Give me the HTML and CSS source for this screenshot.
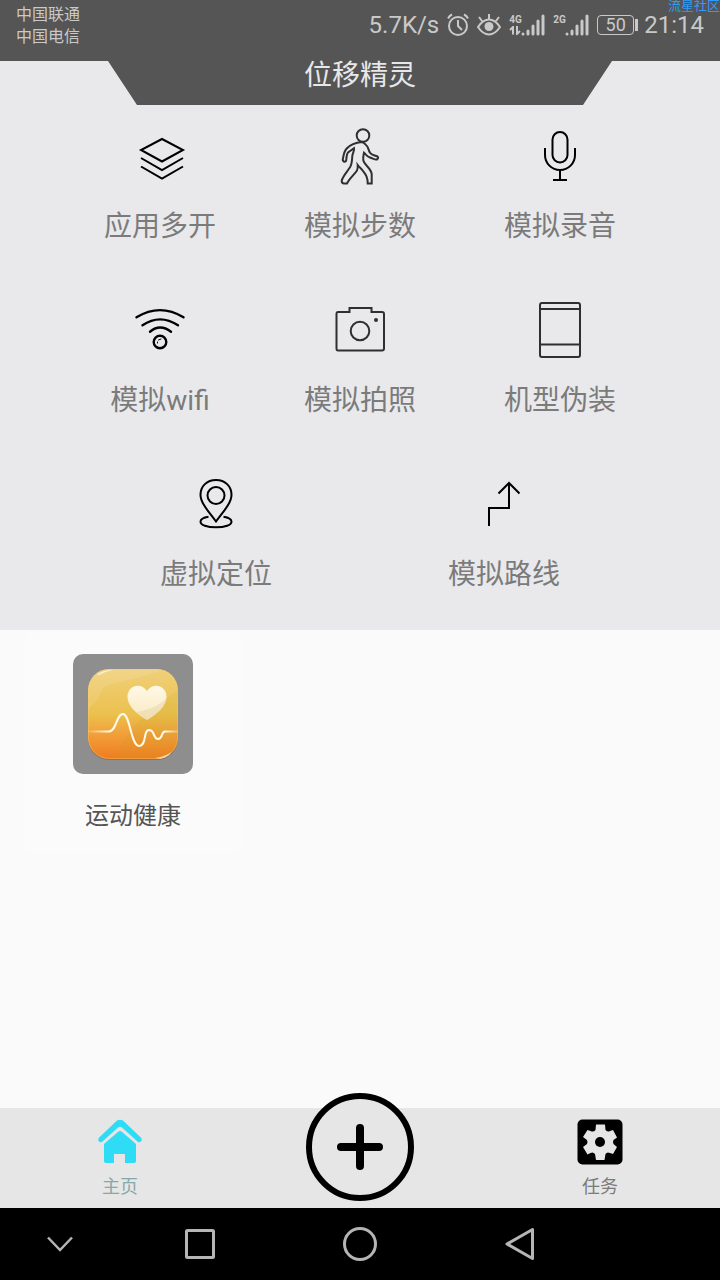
FILE: index.html
```html
<!DOCTYPE html>
<html lang="zh-CN">
<head>
<meta charset="utf-8">
<meta name="viewport" content="width=device-width, initial-scale=1">
<title>位移精灵</title>
<link rel="stylesheet" href="styles.css">
</head>
<body>
<div class="top">
  <header class="header">
    <div class="status">
      <div class="carriers"><span>中国联通</span><span>中国电信</span></div>
      <div class="indicators">
        <span class="speed">5.7K/s</span>
        <svg class="alarm" width="22" height="24" viewBox="0 0 22 24" fill="none" stroke="#c9c9c9" stroke-width="2"><circle cx="11" cy="13" r="9"/><path d="M11 7v6l4 4M1 5.500C2 3.500 3 2.500 5 1.500M21 5.500C20 3.500 19 2.500 17 1.500"/></svg>
        <svg class="eye" width="24" height="24" viewBox="0 0 24 24" fill="none" stroke="#c9c9c9" stroke-width="2"><path d="M1 14C5 8 9 6.500 12 6.500S19 8 23 14C19 20 15 21.500 12 21.500S5 20 1 14ZM12 6V1M5 8L2 4M19 8L22 4"/><circle cx="12" cy="13.500" r="4.500" fill="#c9c9c9" stroke="none"/></svg>
        <span class="signal"><span class="net"><b>4G</b><svg width="12" height="9" viewBox="0 0 12 9" fill="none" stroke="#c9c9c9" stroke-width="2"><path d="M4 8.500V1L1 4M8 0V8L11 5"/></svg></span><svg width="24" height="22" viewBox="0 0 24 22" fill="none" stroke="#c9c9c9" stroke-width="3" stroke-linecap="round"><path d="M2 20V20M7 20V17M12 20V12M17 20V7M22 20V2"/></svg></span>
        <span class="signal"><span class="net"><b>2G</b></span><svg width="24" height="22" viewBox="0 0 24 22" fill="none" stroke="#c9c9c9" stroke-width="3" stroke-linecap="round"><path d="M2 20V20M7 20V17M12 20V12M17 20V7M22 20V2"/></svg></span>
        <span class="battery">50</span>
        <time class="clock">21:14</time>
      </div>
      <span class="watermark">流星社区</span>
    </div>
    <h1 class="title">位移精灵</h1>
  </header>

  <nav class="tools" aria-label="功能">
    <div class="row">
      <button class="tool"><svg viewBox="0 0 60 60" stroke="#000"><path d="M32 12L53 23L32 34.500L11 23ZM11 31L32 43L53 31M11 39.500L32 51.500L53 39.500"/></svg><span>应用多开</span></button>
      <button class="tool"><svg viewBox="0 0 60 60"><circle cx="33" cy="8.500" r="6.300"/><path d="M31.700 15C26 15.500 20 18 16.700 21.500C13.500 25 13.500 29 12.700 33Q14 36 16 34C17 30 16 28 18 25.500L24 21.300C24.500 24 22.700 26 22.300 29C22 34 22 37 20 40.300C17 45 13 49 11.700 53.700Q11.700 56.500 14 56.500H17C19 52 24 48 27 43.500Q28 41 27.700 38C30 41 32 42 33 44C36 48 37.700 50 37.700 56.500H41.700V47C41 41 34 38 33.300 33C32.800 30 33.500 28 34 25.700C36.500 28 37 29.500 40 30.500C44 32 45 33 47 32.500Q49 30.500 47.500 29.500C44 28 41.500 28 40 25.700C38 23 39 20 35.500 17.500Q34 15.500 31.700 15Z"/></svg><span>模拟步数</span></button>
      <button class="tool"><svg viewBox="0 0 60 60" stroke="#000"><rect x="22.500" y="5" width="15" height="30.500" rx="7.500"/><path d="M15 21V28A15 15 0 0 0 45 28V21M30 43V53M23 53H37"/></svg><span>模拟录音</span></button>
    </div>
    <div class="row">
      <button class="tool"><svg viewBox="0 0 60 60" stroke="#000" stroke-linecap="round"><path stroke-width="2.400" d="M6.500 16.300Q30 2 53.500 16.300M12.500 24.300Q30 12.500 48 24.300M20 30.700Q30 22.500 41 30.700"/><circle cx="30" cy="41" r="6.300" stroke-width="2.400"/><path stroke-width="1" d="M27.500 42V41M28.500 39L31 38"/></svg><span>模拟wifi</span></button>
      <button class="tool"><svg viewBox="0 0 60 60"><path d="M8 11H19.500V7H41.500V11H52Q54 11 54 13V47.500Q54 49.500 52 49.500H8Q6.500 49.500 6.500 47.500V13Q6.500 11 8 11Z"/><circle cx="30" cy="30" r="9.300"/><circle cx="46" cy="19" r="2" fill="#2f2f32" stroke="none"/></svg><span>模拟拍照</span></button>
      <button class="tool"><svg viewBox="0 0 60 60"><rect x="10" y="2" width="40" height="54" rx="2"/><path d="M10 8H50M10 43.500H50"/></svg><span>机型伪装</span></button>
    </div>
    <div class="row row-pair">
      <button class="tool"><svg viewBox="0 0 60 60" stroke="#000"><path d="M30 46.500C23 37 14.500 28 14.500 20C14.500 11 21 5 30 5S45.500 11 45.500 20C45.500 28 37 37 30 46.500Z"/><circle cx="30" cy="20.500" r="8.500"/><path d="M22.500 41.700C17 42.500 14.500 44.500 14.500 46.700C14.500 50 21 52.300 30 52.300S45.500 50 45.500 46.700C45.500 44.500 43 42.500 37.500 41.700"/></svg><span>虚拟定位</span></button>
      <button class="tool"><svg viewBox="0 0 60 60" stroke="#000"><path d="M15 51V33H35V8M24.500 18.500L35 8L45.500 18.500"/></svg><span>模拟路线</span></button>
    </div>
  </nav>
</div>

<main class="apps">
  <button class="app">
    <span class="app-tile">
      <svg width="92" height="94" viewBox="0 -1 92 94">
        <defs>
          <linearGradient id="base" x2="0" y2="1"><stop offset="0" stop-color="#f0d07c"/><stop offset=".5" stop-color="#ebc14e"/><stop offset=".7" stop-color="#f1a23c"/><stop offset="1" stop-color="#f07a20"/></linearGradient>
          <linearGradient id="line" gradientUnits="userSpaceOnUse" x1="1" x2="91"><stop offset="0" stop-color="#fff" stop-opacity=".1"/><stop offset=".25" stop-color="#fffbe8"/><stop offset=".85" stop-color="#fffbe8"/><stop offset="1" stop-color="#fff" stop-opacity=".2"/></linearGradient>
          <linearGradient id="heart" x2="0" y2="1"><stop offset="0" stop-color="#fff8e6"/><stop offset="1" stop-color="#f8e9c0"/></linearGradient>
          <clipPath id="shape"><rect x="1" y="1" width="90" height="90" rx="21"/></clipPath>
        </defs>
        <rect x="1" y="2" width="90" height="90" rx="21" fill="#6b6b6b" opacity=".6"/>
        <g clip-path="url(#shape)">
          <rect width="92" height="92" fill="url(#base)"/>
          <path d="M0 0H78C50 14 26 12 16 20C12 30 8 36 0 42Z" fill="#fff" opacity=".1"/>
          <path d="M91 22C70 38 38 58 28 91H91Z" fill="#b8a020" opacity=".13"/>
          <path d="M10 7Q15 2 26 2Q17 4 12 7ZM68 90Q80 88 84 84Q82 90 74 91Z" fill="#fff" opacity=".7"/>
        </g>
        <rect x="1.500" y="1.500" width="89" height="89" rx="21" fill="none" stroke="#f6cf6b" opacity=".35"/>
        <path d="M60 52C50 46 40.500 38 40.500 29C40.500 17 54 14 60 23C66 14 79.500 17 79.500 29C79.500 38 70 46 60 52Z" fill="url(#heart)"/>
        <path d="M79.500 30C79 38 70 46 60 52L49 44C62 42 72 38 79.500 30Z" fill="#d9c38a" opacity=".3"/>
        <path d="M1 63.500H22C30 63 29 46 36 46S44 78 52 78S56 62 62 62S66 71 71 71S74 63.500 78 63.500H91" fill="none" stroke="url(#line)" stroke-width="2"/>
      </svg>
    </span>
    <span class="app-name">运动健康</span>
  </button>
</main>

<nav class="tabs" aria-label="标签">
  <button class="tab tab-active"><svg width="48" height="48" viewBox="0 0 48 48" fill="#2fdcf6"><path d="M2.700 20L21 2.500Q24 .800 27 2.500L45.300 20Q46.500 22 45 23.500Q43 25 41.500 23.500L26 9.500Q24 8 22 9.500L6.500 23.500Q4.500 25 3 23.500Q1.500 22 2.700 20Z"/><path d="M8 26L22.500 13.500Q24 12.500 25.500 13.500L40 26V43Q40 45 38 45H29V36H18V45H10Q8 45 8 43Z"/></svg><span>主页</span></button>
  <button class="fab" aria-label="添加"><svg width="48" height="48" viewBox="0 0 48 48" stroke="#000" stroke-width="8" stroke-linecap="round"><path d="M24 5V43M5 24H43"/></svg></button>
  <button class="tab"><svg width="48" height="48" viewBox="0 0 48 48"><rect x="1.500" y="1.500" width="45" height="45" rx="5"/><path fill="#e6e6e6" d="M20 6.500H29L29.500 12Q32 14.500 34 13L37 12L41 19.500L37.500 22Q36.500 24 37.500 26L41 29L37 36L34 35Q31 33.500 29.500 36L28.500 42H20L19 36Q17 33.500 14.500 35L11.500 36.500L7 29L11 26Q12 24 11 22L7 19L11.500 12L14.500 13Q17.500 14.500 19.500 12Z"/><circle cx="24" cy="24" r="5"/></svg><span>任务</span></button>
</nav>

<nav class="system" aria-label="系统导航">
  <button aria-label="收起"><svg viewBox="0 0 40 40"><path d="M8 13.500L20 26L32 13.500" stroke-width="2.500"/></svg></button>
  <button aria-label="最近任务"><svg viewBox="0 0 40 40"><rect x="6.500" y="6.500" width="27" height="27" rx="1"/></svg></button>
  <button aria-label="主屏幕"><svg viewBox="0 0 40 40"><circle cx="20" cy="20" r="15.500"/></svg></button>
  <button aria-label="返回"><svg viewBox="0 0 40 40"><path d="M32.500 5.500V34.500L7 20Z" stroke-linejoin="round"/></svg></button>
</nav>
</body>
</html>
```
FILE: styles.css
```css
* { box-sizing: border-box; }

body {
  margin: 0;
  min-height: 100vh;
  display: flex;
  flex-direction: column;
  background: #fafafa;
  font-family: Roboto, "Noto Sans CJK SC", sans-serif;
  font-weight: 400;
}

button {
  margin: 0;
  padding: 0;
  border: 0;
  background: none;
  color: inherit;
  font: inherit;
  cursor: pointer;
}

svg { display: block; flex: none; }

.top { background: #e9e9eb; }

.header {
  background: #555;
  clip-path: polygon(0 0, 100% 0, 100% 61px, calc(100% - 108px) 61px, calc(100% - 137px) 100%, 137px 100%, 108px 61px, 0 61px);
}

.status {
  position: relative;
  display: flex;
  justify-content: space-between;
  height: 50px;
  padding: 3px 16px 0;
  color: #c9c9c9;
}

.carriers {
  display: flex;
  flex-direction: column;
  padding-top: 1px;
  font-size: 16px;
  line-height: 22px;
}

.indicators {
  display: flex;
  align-items: center;
  gap: 8px;
  height: 44px;
}

.speed, .clock {
  font-size: 24px;
  line-height: 24px;
}

.signal {
  display: flex;
  align-items: flex-end;
  height: 22px;
}

.net {
  display: flex;
  flex-direction: column;
  align-self: flex-start;
  width: 12px;
  font-size: 10px;
  line-height: 12px;
}

.battery {
  position: relative;
  width: 37px;
  height: 20px;
  margin-right: 2px;
  border: 1px solid #c9c9c9;
  border-radius: 4px;
  font-size: 18px;
  line-height: 18px;
  text-align: center;
}

.battery::after {
  content: "";
  position: absolute;
  top: 3px;
  right: -5px;
  width: 3px;
  height: 12px;
  background: #c9c9c9;
}

.watermark {
  position: absolute;
  top: 0;
  right: 0;
  color: #2f9cf5;
  font-size: 13px;
  line-height: 12px;
}

.title {
  margin: 0;
  height: 55px;
  color: #e8e8e8;
  font-size: 28px;
  font-weight: 400;
  line-height: 52px;
  text-align: center;
}

.tools { padding-bottom: 3px; }

.row {
  display: flex;
  padding: 0 60px;
}

.row-pair { padding: 0 72px; }

.tool {
  flex: 1;
  display: flex;
  flex-direction: column;
  align-items: center;
  gap: 20px;
  padding: 22px 0 32px;
  color: #7b7b7b;
  font-size: 28px;
  line-height: 40px;
}

.tool svg {
  width: 60px;
  height: 60px;
  fill: none;
  stroke-width: 2;
}

.tool svg:not([stroke]) { stroke: #2f2f32; }

.apps {
  flex: 1;
  padding: 2px 24px;
}

.app {
  display: flex;
  flex-direction: column;
  align-items: center;
  gap: 25px;
  width: 218px;
  padding: 22px 0 20px;
  border-radius: 10px;
  background: #fbfbfb;
  color: #555;
  font-size: 24px;
  line-height: 34px;
}

.app-tile {
  display: grid;
  place-items: center;
  width: 120px;
  height: 120px;
  border-radius: 10px;
  background: #8e8e8e;
}

.tabs {
  display: grid;
  grid-template-columns: repeat(3, 1fr);
  justify-items: center;
  align-items: start;
  height: 100px;
  background: #e6e6e6;
}

.tab {
  display: flex;
  flex-direction: column;
  align-items: center;
  gap: 8px;
  padding-top: 10px;
  color: #7b7b7b;
  font-size: 18px;
  line-height: 26px;
}

.tab-active { color: #86a8a8; }

.fab {
  display: grid;
  place-items: center;
  width: 108px;
  height: 108px;
  margin-top: -15px;
  border: 6px solid #000;
  border-radius: 50%;
  background: #e6e6e6;
}

.system {
  display: grid;
  grid-template-columns: 3fr 4fr 4fr 4fr 3fr;
  height: 72px;
  background: #000;
}

.system button {
  display: grid;
  place-items: center;
}

.system svg {
  width: 40px;
  height: 40px;
  fill: none;
  stroke: #b5b5b5;
  stroke-width: 3;
}
```
